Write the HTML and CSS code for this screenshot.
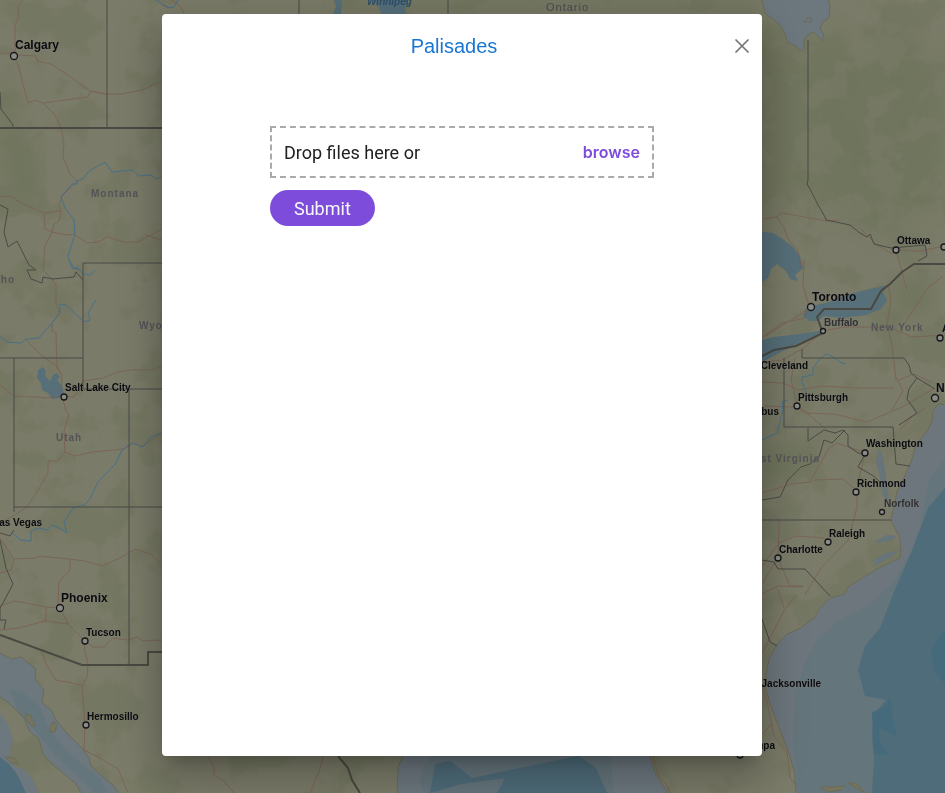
FILE: index.html
```html
<!DOCTYPE html>
<html lang="en">
<head>
<meta charset="utf-8">
<meta name="viewport" content="width=device-width, initial-scale=1">
<title>Palisades</title>
<link rel="stylesheet" href="styles.css">
</head>
<body>
<svg class="map" viewBox="0 0 945 793" preserveAspectRatio="xMidYMid slice" aria-hidden="true">
  <defs>
    <filter id="terrain" x="0" y="0" width="100%" height="100%" color-interpolation-filters="sRGB">
      <feTurbulence type="fractalNoise" baseFrequency="0.022" numOctaves="5" seed="8"/>
      <feColorMatrix values="0 0 0 0 0.42  0 0 0 0 0.44  0 0 0 0 0.34  9 0 0 0 -4.7"/>
    </filter>
    <filter id="clearing" x="0" y="0" width="100%" height="100%" color-interpolation-filters="sRGB">
      <feTurbulence type="fractalNoise" baseFrequency="0.03" numOctaves="5" seed="21"/>
      <feColorMatrix values="0 0 0 0 0.48  0 0 0 0 0.49  0 0 0 0 0.41  9 0 0 0 -4.3"/>
    </filter>
    <filter id="soft"><feGaussianBlur stdDeviation="9"/></filter>
  </defs>

  <rect class="land" width="945" height="793"/>
  <rect width="945" height="793" filter="url(#terrain)" opacity=".35"/>
  <g class="forest">
    <path filter="url(#soft)" d="M340 0H750L790 50L835 25L865 60L890 20L945 70V190L900 235L860 225L815 210L808 180L770 220L740 230V10H340z"/>
    <path filter="url(#soft)" d="M0 80L12 92L15 130L38 155L42 175L30 200L12 195L0 170z"/>
    <path filter="url(#soft)" d="M890 285L925 275L935 305L900 320z"/>
    <path filter="url(#soft)" d="M762 445L800 440L830 430L800 470L762 495z"/>
  </g>
  <rect x="762" width="183" height="260" filter="url(#clearing)" opacity=".5"/>

  <g class="water">
    <path d="M762 0L765 13L771 18L779 24L785 33L787 42L796 46L801 51L804 47L804 40L809 34L814 32L820 38L824 41L823 33L820 29L823 22L829 18L830 4L828 0z"/>
    <path class="shelf" d="M945 405L939 404L933 410L932 421L928 430L920 440L915 448L911 462L903 480L897 492L893 510L891 521L899 536L901 550L900 558L889 563L875 570L862 578L848 587L845 594L830 598L820 608L815 617L801 628L787 634L777 644L769 659L766 673L766 690L772 710L780 730L787 748L794 770L796 793H945z"/>
    <path class="mid" d="M945 458L928 482L923 515L920 540L909 557L890 586L870 605L840 620L817 640L803 666L795 700L793 735L797 793H945z"/>
    <path class="deep" d="M945 488L928 508L912 550L894 592L880 628L865 646L858 670L865 696L886 700L875 713L872 735L874 760L872 793H945z"/>
    <path class="deepest" d="M890 698L884 708L872 712L873 738L875 754L889 755L880 742L879 728L897 736L893 720zM945 630L931 650L935 672L945 684z"/>
    <path d="M762 232L773 233L784 240L793 247L800 256L803 268L795 275L798 281L790 279L786 271L777 264L771 269L768 278L762 282z" class="lake"/>
    <path class="lake" d="M803 316L807 307L826 303L850 294L870 289L888 285L883 292L887 300L881 309L866 315L842 318L824 316L818 321L810 321z"/>
    <path class="lake" d="M762 340L774 337L800 334L820 331L821 333L801 342L785 350L762 362z"/>
    <path class="lake" d="M38 370L43 367L46 371L45 376L50 381L53 375L57 373L60 377L57 380L62 386L64 393L59 398L52 399L48 393L42 390L41 383L37 378z"/>
    <path class="lake" d="M342 0H334L336 7L333 14H341zM373 0H408L405 8L406 14H381L379 8z"/>
    <path d="M0 653L12 659L21 657L36 669L35 679L44 690L42 702L52 711L56 720L67 733L82 748L89 758L91 766L102 776L113 785L119 793H81L76 784L64 774L52 764L43 754L39 739L29 731L24 718L14 708L6 701L0 697z"/>
    <path class="mid" d="M10 690L22 692L39 706L49 729L66 750L82 764L99 777L108 793H96L70 769L50 750L37 732L20 715z"/>
    <path d="M0 713L8 724L13 739L9 755L14 766L25 770L33 780L39 793H0z"/>
    <path class="deep" d="M0 757L10 765L18 776L26 793H0z"/>
    <path d="M403 756L398 767L397 793H668L663 785L656 775L650 756z"/>
    <path class="mid" d="M432 756L423 767L419 780L424 793H613L611 756z"/>
    <path class="deep" d="M435 764L450 761L472 778L510 770L544 763L578 756H579L596 768L607 793H497L505 778L462 784L430 793z"/>
    <path class="bay" d="M879 448L876 461L880 477L883 496L889 502L887 485L885 470L883 457zM875 541L887 535L897 536L890 541L878 543zM872 561L886 553L900 550L887 559L876 565z"/>
  </g>
  <g class="coast">
    <path d="M762 0L765 13L771 18L779 24L785 33L787 42L796 46L801 51L804 47L804 40L809 34L814 32L820 38L824 41L823 33L820 29L823 22L829 18L830 4L828 0M804 22L807 19L808 17L812 19L811 22z"/>
    <path d="M945 405L939 404L933 410L932 421L928 430L920 440L915 448L911 462L903 480L897 492L893 510L891 521L899 536L901 550L900 558L889 563L875 570L862 578L848 587L845 594L830 598L820 608L815 617L801 628L787 634L777 644L769 659L766 673L766 690L772 710L780 730L787 748L794 770L796 793"/>
    <path d="M0 653L12 659L21 657L36 669L35 679L44 690L42 702L52 711L56 720L67 733L82 748L89 758L91 766L102 776L113 785L119 793M0 697L6 701L14 708L24 718L29 731L39 739L43 754L52 764L64 774L76 784L81 793M403 756L398 767L397 793M650 756L656 775L663 785L668 793"/>
    <path class="isle" d="M26 713L31 716L35 726L32 726L26 719zM53 722L57 724L55 732L50 732L50 727zM5 757L15 758L18 764L11 763zM820 787L828 792L841 790L845 786L829 787zM847 782L856 788L865 793L857 784z"/>
  </g>

  <g class="road">
    <path d="M23 0L18 7L19 17L15 25L15 52L3 54L0 52M15 55L36 56L37 61L51 64L68 75L80 84L90 91L105 94L121 94L142 90L162 81M15 55L20 72L24 88L28 103L35 100L43 103L55 115L61 128L64 143L63 157L70 174L77 181L62 196L59 205L61 211L59 221L54 224L52 232L66 235L74 234L87 243L98 242L108 237L124 242L138 242L162 229M145 235L162 240M0 197L11 196L21 203L44 213L60 211M44 213L45 229L52 232L45 246L43 270L49 276L56 284L56 303L60 313L52 323L52 331L56 333L57 368L62 375L61 392L66 411L69 415L64 431L65 452L58 461L48 461L48 473L36 494L26 508L0 524M43 103L88 97L91 91L105 94"/>
    <path d="M26 340L42 356L57 366L62 375M0 385L14 396L36 397L46 398L63 396L74 397L83 381L103 378L118 372L130 370L152 370L162 366M65 452L74 456L93 452L123 449L134 443L141 447L162 433"/>
    <path d="M0 538L14 559L35 558L39 556L58 558L69 559L85 561L102 566L120 558L135 549L151 554L158 562L162 563M14 559L11 570L0 573M70 560L70 570L59 582L58 604L62 611L68 624L84 640L93 647L104 647L113 638L128 640L137 637L143 641L162 640M0 606L15 601L46 607L59 608M0 630L19 628L45 621L69 624M46 607V622M84 641L85 652L88 664L87 677L82 686L72 683L56 680L47 666L41 650M82 686L85 724L84 750L98 757L108 763L118 769L128 793"/>
    <path d="M762 219L777 217L782 213L810 218L827 221L841 220M777 217L784 228L788 239L798 251L802 270M804 260L803 285L809 306M764 336L782 323L805 318L807 310L762 338M823 331L845 327L888 327L912 337L945 335M888 284L891 300L887 324L892 345L896 380M823 331L804 348L782 360L762 362M762 382L783 383L798 390L822 386L856 388L894 388M762 406L791 407L795 406L806 413L834 414L867 422L902 407L935 388M899 380L914 374L931 382M795 358L791 380L797 405L809 415L827 430M860 228L876 244L892 254L896 250M900 250L920 251L945 246M897 254L907 290M896 377L903 391L892 410M900 430L912 417L925 408M904 324L928 288L943 276"/>
    <path d="M762 493L775 489L792 484L810 482L829 448L837 443L863 452M815 480L843 479L854 488M865 454L859 478L857 493L857 507L848 540L821 568L805 595M762 566L779 543L796 536L825 538M778 558L790 586L803 586M778 558L768 574L763 583M772 515L779 520L778 559M762 594L778 586L803 587M778 590L784 608M762 654L775 628L784 611L796 595M762 685L768 706L774 736L787 752L790 778L796 785M771 724L762 735M208 756L214 767V775L224 781L234 793M323 756L320 769L310 793M653 756L659 777L667 785L670 793M171 0L180 6L184 13M162 5L172 8"/>
  </g>
  <g class="river">
    <path d="M156 0L168 8L174 7L178 0M162 177L157 179L151 175L139 176L132 170L112 172L105 162L89 171L83 179L77 181L77 184L72 184L61 197L65 208L74 220L75 234L68 256L72 268L79 269M0 337L8 342L21 343L26 339L39 338L52 323L60 312L60 304L66 305L82 320L84 322L90 320L88 313L96 300M69 260L74 268L78 268L83 274L90 275L95 271M162 433L151 437L143 447L132 443L122 450L116 463L98 482L90 499L84 505L73 508L64 522L67 533L61 529L52 525L47 530L39 528L31 531L31 541L20 540L12 532"/>
    <path d="M805 402L807 395L802 382L802 377L813 375L813 368L818 361L826 354L832 356L840 362L845 364M788 400L782 402L783 409L777 433L762 440"/>
  </g>
  <g class="border">
    <path d="M107 0V128M162 263H83V389H162M0 358H83M14 358V507H162M129 389V665M14 507V512M299 0V14M448 0V14M784 358V427H893M802 349V358H904L909 365L911 373L917 378L909 389L907 399L917 413L899 425M917 378L935 389M762 520H891M762 560L774 562L778 569L805 569L830 596M808 40V180L807 184L811 191L817 203L825 217L826 220L850 225L860 233L867 237L870 234L874 244L891 248L925 245L927 256L918 261M893 427L896 464L910 466"/>
    <path d="M808 428L808 441L824 430L835 433L843 430L848 435L848 446L858 453L865 454L858 467L872 475L879 481M845 430L832 443L824 440L819 457L810 464L801 467L788 480L780 497L762 500M762 619L770 642L777 646M0 205L8 209L4 232L8 247L17 241L29 265L36 270L27 270L31 279L42 283L43 277L53 279L74 277L76 272L83 280M0 92L1 109L13 125L13 128M0 533L10 536L14 530M0 540L6 568L13 584L3 603L0 608V620L6 620L4 629"/>
    <path class="national" d="M0 128H162M0 635L82 665H148V652H162M338 756L348 768L352 780L360 793M762 356L774 350L796 346L823 333L817 317L824 309H871L881 291L890 284L902 272L914 264H945"/>
  </g>

  <g class="city-dot">
    <circle cx="14" cy="56" r="3.5"/><circle cx="64" cy="397" r="3"/><circle cx="60" cy="608" r="3.5"/><circle cx="85" cy="641" r="3"/><circle cx="86" cy="725" r="3"/><circle cx="896" cy="250" r="3"/><circle cx="944" cy="247" r="3"/><circle cx="811" cy="307" r="3.5"/><circle cx="823" cy="331" r="2.5"/><circle cx="940" cy="338" r="3"/><circle cx="797" cy="406" r="3"/><circle cx="935" cy="398" r="3.5"/><circle cx="865" cy="453" r="3"/><circle cx="856" cy="492" r="3"/><circle cx="882" cy="512" r="2.5"/><circle cx="828" cy="542" r="3"/><circle cx="778" cy="558" r="3"/><circle cx="740" cy="755" r="3"/>
  </g>
  <g class="region">
    <text x="91" y="197">Montana</text><text x="15" y="283" text-anchor="end">Idaho</text><text x="139" y="329">Wyoming</text><text x="56" y="441">Utah</text><text x="871" y="331">New York</text><text x="820" y="462" text-anchor="end">West Virginia</text><text class="province" x="546" y="11">Ontario</text>
  </g>
  <text class="lake-name" x="367" y="5">Winnipeg</text>
  <g class="city">
    <text class="large" x="15" y="49">Calgary</text><text x="65" y="391">Salt Lake City</text><text x="42" y="526" text-anchor="end">Las Vegas</text><text class="large" x="61" y="602">Phoenix</text><text x="86" y="636">Tucson</text><text x="87" y="720">Hermosillo</text>
    <text x="897" y="244">Ottawa</text><text class="large" x="812" y="301">Toronto</text><text class="minor" x="824" y="326">Buffalo</text><text x="942" y="332">Albany</text><text x="808" y="369" text-anchor="end">Cleveland</text><text x="798" y="401">Pittsburgh</text><text x="779" y="415" text-anchor="end">Columbus</text><text class="large" x="936" y="392">New York</text><text x="866" y="447">Washington</text><text x="857" y="487">Richmond</text><text class="minor" x="884" y="507">Norfolk</text><text x="829" y="537">Raleigh</text><text x="779" y="553">Charlotte</text><text x="821" y="687" text-anchor="end">Jacksonville</text><text x="775" y="749" text-anchor="end">Tampa</text>
  </g>
</svg>

<div class="overlay">
  <main class="dialog" role="dialog" aria-modal="true" aria-labelledby="dialog-title">
    <header class="dialog-header">
      <h1 class="dialog-title" id="dialog-title">Palisades</h1>
      <button class="close" type="button" aria-label="Close">
        <svg viewBox="0 0 24 24" width="24" height="24"><path d="M5.500 5.500L18.500 18.500M18.500 5.500L5.500 18.500"/></svg>
      </button>
    </header>
    <form class="upload">
      <div class="dropzone">
        <span>Drop files here or</span>
        <button class="browse" type="button">browse</button>
      </div>
      <button class="submit" type="submit">Submit</button>
    </form>
  </main>
</div>
</body>
</html>
```
FILE: styles.css
```css
* { box-sizing: border-box; }

body {
  margin: 0;
  background: #797a67;
  font-family: Roboto, "Liberation Sans", sans-serif;
  color: #212121;
}

button {
  margin: 0;
  padding: 0;
  border: 0;
  background: none;
  font: inherit;
  cursor: pointer;
}

.map {
  position: fixed;
  inset: 0;
  width: 100%;
  height: 100%;
  font-family: "Liberation Sans", Arial, sans-serif;
}

.map .land { fill: #7a7b68; }
.forest { fill: #6e745b; opacity: .8; }
.water { fill: #6c777e; }
.water .shelf { fill: #6c767c; }
.water .mid { fill: #65757c; }
.water .deep { fill: #4e6c79; }
.water .deepest { fill: #456a7b; }
.water .lake { fill: #566f79; }
.water .bay { fill: #67747a; }
.coast { fill: none; stroke: #6b6b59; }
.coast .isle { fill: #74745f; }
.road { fill: none; stroke: #7c5e53; opacity: .75; }
.river { fill: none; stroke: #47708a; }
.border { fill: none; stroke: #4b4b46; }
.border .national { stroke: #4a4841; stroke-width: 2; }
.city-dot { fill: #8b8b88; stroke: #17171a; stroke-width: 1.300; }

.region {
  font-size: 10px;
  font-weight: 700;
  letter-spacing: 1px;
  fill: #545458;
}

.region .province { font-size: 11px; fill: #4b4b50; font-weight: 400; }

.lake-name {
  font-size: 10px;
  font-style: italic;
  font-weight: 700;
  fill: #2f4e68;
}

.city {
  font-size: 10px;
  font-weight: 700;
  fill: #0b0b10;
  stroke: #85857a;
  stroke-width: 1px;
  stroke-opacity: .4;
  paint-order: stroke;
}

.city .large { font-size: 12px; }
.city .minor { fill: #303034; }

.overlay {
  position: relative;
  display: flex;
  justify-content: center;
  min-height: 100vh;
  padding: 14px 21px 37px 0;
}

.dialog {
  width: 100%;
  max-width: 600px;
  border-radius: 4px;
  background: #fff;
  box-shadow:
    0 11px 15px -7px rgba(0, 0, 0, .2),
    0 24px 38px 3px rgba(0, 0, 0, .14),
    0 9px 46px 8px rgba(0, 0, 0, .12);
}

.dialog-header {
  display: flex;
  align-items: center;
  height: 64px;
  padding: 0 8px 0 16px;
}

.dialog-title {
  flex: 1;
  margin: 0;
  font-family: "Liberation Sans", Arial, sans-serif;
  font-size: 20px;
  font-weight: 400;
  line-height: 32px;
  text-align: center;
  color: #1976d2;
}

.close { display: flex; }
.close svg { fill: none; stroke: #757575; stroke-width: 1.700; }

.upload { padding: 48px 18%; }

.dropzone {
  display: flex;
  align-items: center;
  justify-content: space-between;
  height: 52px;
  margin-bottom: 12px;
  padding: 0 12px;
  border: 2px dashed #aaa;
  font-size: 18px;
}

.browse {
  font-family: Inter, "Liberation Sans", sans-serif;
  font-size: 16px;
  font-weight: 600;
  color: #7e4cdb;
}

.submit {
  height: 36px;
  padding: 0 24px;
  border-radius: 18px;
  background: #7e4cdb;
  font-size: 18px;
  color: #f8f8f8;
}
```
